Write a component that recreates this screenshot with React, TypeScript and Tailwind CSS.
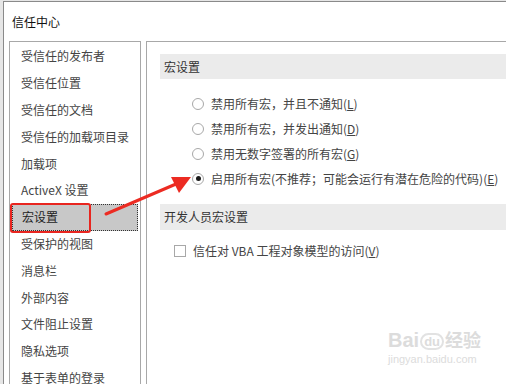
const navItems = [
  "受信任的发布者",
  "受信任位置",
  "受信任的文档",
  "受信任的加载项目录",
  "加载项",
  "ActiveX 设置",
  "宏设置",
  "受保护的视图",
  "消息栏",
  "外部内容",
  "文件阻止设置",
  "隐私选项",
  "基于表单的登录",
];

const radios: { text: string; key: string; checked?: boolean }[] = [
  { text: "禁用所有宏，并且不通知", key: "L" },
  { text: "禁用所有宏，并发出通知", key: "D" },
  { text: "禁用无数字签署的所有宏", key: "G" },
  { text: "启用所有宏(不推荐；可能会运行有潜在危险的代码)", key: "E", checked: true },
];

function Radio({ checked }: { checked?: boolean }) {
  return (
    <span className="w-[12px] h-[12px] rounded-full border border-[#a8a8a8] bg-white flex items-center justify-center shrink-0">
      {checked && <span className="w-[5px] h-[5px] rounded-full bg-[#1a1a1a]" />}
    </span>
  );
}

export default function App() {
  return (
    <div
      className="w-[506px] h-[384px] overflow-hidden bg-[#e6e6e6] relative"
      style={{ fontFamily: '"Noto Sans CJK SC", "Noto Sans", sans-serif' }}
    >
      <div className="absolute left-[3px] top-[1px] right-0 bottom-0 bg-white border-l border-t border-[#8a8a8a] flex flex-col">
        <div className="h-[39px] shrink-0 flex items-center pl-[8px] text-[12px] text-[#111]">信任中心</div>
        <div className="flex flex-1 gap-[5px] pl-[5px]">
          <div className="w-[132px] border border-[#a8a8a8] border-b-0 pt-[1px]">
            {navItems.map((t) => {
              const sel = t === "宏设置";
              return (
                <div
                  key={t}
                  className={`h-[26.8px] flex items-center pl-[9px] mx-[2px] text-[12px] ${
                    sel ? "bg-[#c8c8c8] border border-dotted border-[#333] text-[#222]" : "text-[#444]"
                  }`}
                >
                  {t}
                </div>
              );
            })}
          </div>
          <div className="flex-1 border-l border-t border-[#a8a8a8] pl-[13px] pt-[12px]">
            <div className="h-[25px] bg-[#ebebeb] flex items-center pl-[4px] text-[12px] text-[#333]">宏设置</div>
            <div className="pt-[12px] pl-[32px] flex flex-col">
              {radios.map((r) => (
                <div key={r.key} className="h-[25px] flex items-center gap-[7px] text-[12px] text-[#444] whitespace-nowrap">
                  <Radio checked={r.checked} />
                  <span>
                    {r.text}(<span className="underline">{r.key}</span>)
                  </span>
                </div>
              ))}
            </div>
            <div className="mt-[13px] h-[26px] bg-[#ebebeb] flex items-center pl-[4px] text-[12px] text-[#333]">
              开发人员宏设置
            </div>
            <div className="pt-[10px] pl-[14px] h-[32px] flex items-center gap-[7px] text-[12px] text-[#444] whitespace-nowrap">
              <span className="w-[12px] h-[12px] border border-[#a8a8a8] bg-white shrink-0" />
              <span>
                信任对 VBA 工程对象模型的访问(<span className="underline">V</span>)
              </span>
            </div>
          </div>
        </div>
      </div>

      {/* red highlight box */}
      <div className="absolute left-[10px] top-[203px] w-[81px] h-[30px] border-[2.5px] border-[#e8251f] rounded-[3px]" />

      {/* red arrow */}
      <svg className="absolute left-0 top-0" width="506" height="384">
        <line x1="106" y1="214" x2="176" y2="184" stroke="#ec2b22" strokeWidth="3" strokeLinecap="round" />
        <polygon points="191,177 171,177 179,193" fill="#ec2b22" />
      </svg>

      {/* watermark */}
      <div className="absolute left-[388px] top-[330px] text-[#dcdcdc] leading-none select-none">
        <div className="flex items-end text-[20px] font-bold" style={{ fontFamily: '"Liberation Sans", "Noto Sans CJK SC", sans-serif' }}>
          <span>Bai</span>
          <span className="text-[13px] border-2 border-[#e2e2e2] rounded-full px-[2px] mx-[1px]">du</span>
          <span className="text-[18px]">经验</span>
        </div>
        <div className="text-[11px] mt-[4px]" style={{ fontFamily: '"Liberation Sans", sans-serif' }}>jingyan.baidu.com</div>
      </div>
    </div>
  );
}
